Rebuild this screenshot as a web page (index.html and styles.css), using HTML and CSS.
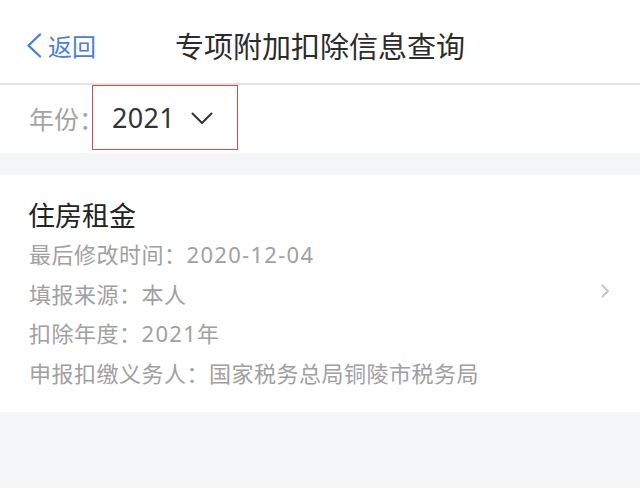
FILE: index.html
```html
<!DOCTYPE html>
<html lang="zh-CN">
<head>
<meta charset="utf-8">
<title>专项附加扣除信息查询</title>
<link rel="stylesheet" href="styles.css">
</head>
<body>
<div class="page">
  <header class="nav">
    <a class="back">
      <svg class="back-icon" width="16" height="25" viewBox="0 0 16 25"><polyline points="14,1.5 2.5,12.5 14,23.5" fill="none" stroke="#4a80d4" stroke-width="2.4" stroke-linecap="round" stroke-linejoin="round"/></svg>
      <span>返回</span>
    </a>
    <h1 class="title">专项附加扣除信息查询</h1>
    <span></span>
  </header>
  <div class="year-row">
    <span class="year-label">年份：</span>
    <div class="year-box">
      <span class="year-value">2021</span>
      <svg class="down" width="22" height="13" viewBox="0 0 22 13"><polyline points="1.5,1.5 11,11 20.5,1.5" fill="none" stroke="#333" stroke-width="2" stroke-linecap="round" stroke-linejoin="round"/></svg>
    </div>
  </div>
  <div class="gap"></div>
  <div class="card">
    <div class="card-body">
      <div class="card-title">住房租金</div>
      <div class="line">最后修改时间：<span class="num">2020-12-04</span></div>
      <div class="line">填报来源：本人</div>
      <div class="line">扣除年度：<span class="num">2021</span>年</div>
      <div class="line">申报扣缴义务人：国家税务总局铜陵市税务局</div>
    </div>
    <svg class="arrow" width="9" height="14" viewBox="0 0 9 14"><polyline points="1.5,1.5 7,7 1.5,12.5" fill="none" stroke="#c6c6c6" stroke-width="2" stroke-linecap="round" stroke-linejoin="round"/></svg>
  </div>
</div>
</body>
</html>
```

FILE: styles.css
```css
html, body {
  margin: 0;
  padding: 0;
  background: #f4f6f7;
  font-family: "Noto Sans", "Noto Sans CJK SC", sans-serif;
}
.page {
  width: 640px;
  min-height: 488px;
  background: #f4f6f7;
}
.nav {
  height: 75px;
  padding-top: 8px;
  background: #fff;
  border-bottom: 2px solid #e4e4e4;
  display: grid;
  grid-template-columns: 1fr auto 1fr;
  align-items: center;
}
.back {
  display: flex;
  align-items: center;
  padding-left: 26px;
  color: #4a80d4;
  font-family: "Noto Sans CJK SC", sans-serif;
  font-size: 24px;
  gap: 6px;
}
.back-icon { display: block; }
.title {
  margin: 0;
  font-family: "Noto Sans CJK SC", sans-serif;
  font-weight: 400;
  font-size: 29px;
  color: #2b2b2b;
  line-height: 40px;
  margin-top: -2px;
}
.year-row {
  height: 68px;
  background: #fff;
  display: flex;
  align-items: flex-start;
  padding-left: 29px;
}
.year-label {
  width: 63px;
  white-space: nowrap;
  font-family: "Noto Sans CJK SC", sans-serif;
  font-size: 25px;
  color: #a3a3a3;
  line-height: 66px;
}
.year-box {
  width: 125px;
  height: 63px;
  border: 1.5px solid #d24a4a;
  background: #fff;
  display: flex;
  align-items: center;
  padding-left: 19px;
  box-sizing: content-box;
  position: relative;
}
.year-value {
  font-size: 27px;
  color: #333;
  letter-spacing: 0.3px;
}
.down {
  display: block;
  margin-left: 16px;
  margin-top: 2px;
}
.gap {
  height: 22px;
  background: #f4f6f7;
}
.card {
  background: #fff;
  padding: 20px 30px 19px 28px;
  display: flex;
  align-items: center;
  justify-content: space-between;
}
.card-title {
  font-family: "Noto Sans CJK SC", sans-serif;
  font-size: 27px;
  line-height: 40px;
  color: #222;
}
.line {
  font-size: 22px;
  line-height: 39.5px;
  color: #a0a0a0;
  white-space: nowrap;
  letter-spacing: 0.5px;
  padding-left: 1px;
}
.num {
  letter-spacing: 1.3px;
}
.arrow {
  display: block;
  margin-top: -6px;
}
```
